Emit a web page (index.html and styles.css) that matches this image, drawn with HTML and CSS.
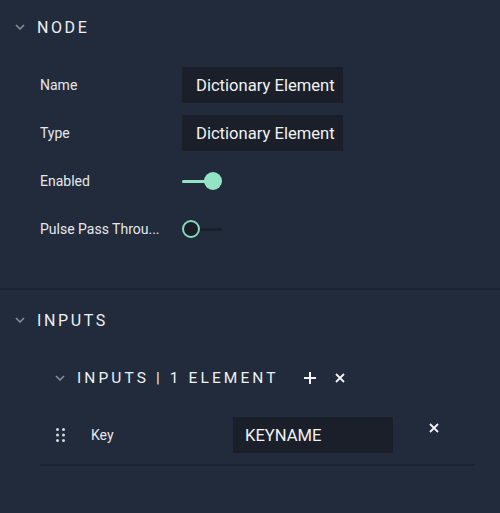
FILE: index.html
```html
<!DOCTYPE html>
<html>
<head>
<meta charset="utf-8">
<link rel="stylesheet" href="styles.css">
</head>
<body>
<div class="panel">
  <section class="section node">
    <div class="sec-head">
      <svg class="chev" width="10" height="6" viewBox="0 0 10 6"><path d="M1 1 L5 5 L9 1" fill="none" stroke="#8a919c" stroke-width="1.5"/></svg>
      <span class="sec-title">NODE</span>
    </div>
    <div class="rows">
      <div class="row">
        <span class="label">Name</span>
        <div class="field">Dictionary Element</div>
      </div>
      <div class="row">
        <span class="label">Type</span>
        <div class="field">Dictionary Element</div>
      </div>
      <div class="row">
        <span class="label">Enabled</span>
        <div class="toggle on"><span class="track"></span><span class="knob"></span></div>
      </div>
      <div class="row">
        <span class="label">Pulse Pass Throu...</span>
        <div class="toggle off"><span class="track"></span><span class="knob"></span></div>
      </div>
    </div>
  </section>
  <section class="section inputs">
    <div class="sec-head">
      <svg class="chev" width="10" height="6" viewBox="0 0 10 6"><path d="M1 1 L5 5 L9 1" fill="none" stroke="#8a919c" stroke-width="1.5"/></svg>
      <span class="sec-title">INPUTS</span>
    </div>
    <div class="sub">
      <div class="sub-head">
        <svg class="chev" width="10" height="6" viewBox="0 0 10 6"><path d="M1 1 L5 5 L9 1" fill="none" stroke="#8a919c" stroke-width="1.5"/></svg>
        <span class="sub-title">INPUTS | 1 ELEMENT</span>
        <svg class="icon plus" width="14" height="14" viewBox="0 0 14 14"><path d="M7 1 V13 M1 7 H13" stroke="#f2f4f7" stroke-width="2"/></svg>
        <svg class="icon close" width="10" height="10" viewBox="0 0 10 10"><path d="M1 1 L9 9 M9 1 L1 9" stroke="#f2f4f7" stroke-width="1.8"/></svg>
      </div>
      <div class="item">
        <svg class="grip" width="9" height="14" viewBox="0 0 9 14"><g fill="#d5d9df"><circle cx="1.5" cy="1.5" r="1.5"/><circle cx="7.5" cy="1.5" r="1.5"/><circle cx="1.5" cy="7" r="1.5"/><circle cx="7.5" cy="7" r="1.5"/><circle cx="1.5" cy="12.5" r="1.5"/><circle cx="7.5" cy="12.5" r="1.5"/></g></svg>
        <span class="item-label">Key</span>
        <div class="field key">KEYNAME</div>
        <svg class="icon remove" width="10" height="10" viewBox="0 0 10 10"><path d="M1 1 L9 9 M9 1 L1 9" stroke="#f2f4f7" stroke-width="1.8"/></svg>
      </div>
    </div>
  </section>
</div>
</body>
</html>
```

FILE: styles.css
```css
* { box-sizing: border-box; }
html, body {
  margin: 0;
  padding: 0;
  background: #212b3b;
  font-family: Roboto, "Liberation Sans", sans-serif;
  color: #eceef1;
}
.panel {
  width: 500px;
  height: 513px;
  background: #212b3b;
}
.section.node {
  padding-bottom: 35px;
  border-bottom: 2px solid #1b2230;
}
.sec-head {
  height: 54px;
  display: flex;
  align-items: center;
  padding-left: 15px;
}
.chev { display: block; }
.sec-title {
  margin-left: 12px;
  font-size: 16px;
  letter-spacing: 2.6px;
  color: #eef0f3;
}
.rows {
  margin-top: 7px;
  padding-left: 40px;
}
.row {
  height: 48px;
  display: flex;
  align-items: center;
}
.label {
  width: 142px;
  font-size: 14px;
  color: #e6e8ec;
  white-space: nowrap;
}
.field {
  width: 161px;
  height: 36px;
  background: #1a1f2a;
  display: flex;
  align-items: center;
  padding-left: 14px;
  font-size: 16.6px;
  color: #f0f2f5;
  white-space: nowrap;
  overflow: hidden;
}
.toggle {
  position: relative;
  width: 40px;
  height: 18px;
}
.toggle .track {
  position: absolute;
  left: 0;
  right: 0;
  top: 8px;
  height: 3px;
  border-radius: 2px;
}
.toggle .knob {
  position: absolute;
  top: 0;
  width: 18px;
  height: 18px;
  border-radius: 50%;
}
.toggle.on .track { background: #93e4c4; right: 4px; }
.toggle.on .knob { right: 0; background: #93e4c4; }
.toggle.off .track { background: #1a1f2a; }
.toggle.off .knob { left: 0; background: #1a1f2a; border: 2.5px solid #86d9b8; }
.section.inputs { padding-top: 3px; }
.sub {
  margin-top: 11px;
  padding-left: 40px;
  padding-right: 25px;
}
.sub-head {
  height: 40px;
  display: flex;
  align-items: center;
  padding-left: 15px;
}
.sub-title {
  margin-left: 12px;
  font-size: 15.5px;
  letter-spacing: 3.1px;
  color: #eef0f3;
}
.icon { display: block; }
.plus { margin-left: 24px; }
.close { margin-left: 18px; }
.item {
  margin-top: 19px;
  display: flex;
  align-items: center;
  padding-left: 16px;
  padding-bottom: 11px;
  border-bottom: 2px solid #1b2230;
}
.grip { display: block; }
.item-label {
  width: 142px;
  margin-left: 26px;
  font-size: 14px;
  color: #e6e8ec;
}
.field.key {
  width: 160px;
  padding-left: 12px;
}
.remove {
  align-self: flex-start;
  margin-top: 6px;
  margin-left: 36px;
}
```
